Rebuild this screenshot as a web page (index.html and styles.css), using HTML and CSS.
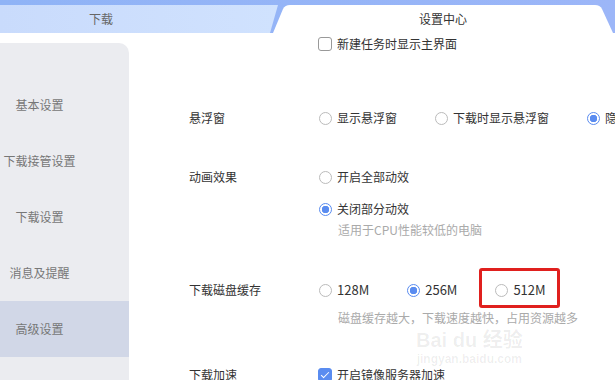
FILE: index.html
```html
<!DOCTYPE HTML>
<html lang="zh-CN">
  <head>
    <meta charset="utf-8">
    <title>设置中心</title>
    <link rel="stylesheet" href="styles.css">
  </head>
  <body>
    <div class="window">
      <div class="tabs">
        <div class="tab">下载</div>
        <div class="tab active">设置中心</div>
      </div> <!-- .tabs -->
      <div class="main">
        <ul class="menu">
          <li>基本设置</li>
          <li>下载接管设置</li>
          <li>下载设置</li>
          <li>消息及提醒</li>
          <li class="current">高级设置</li>
        </ul> <!-- .menu -->
        <div class="content">
          <div class="row first">
            <span class="label"></span>
            <div class="options">
              <label class="opt"><span class="check"></span>新建任务时显示主界面</label>
            </div>
          </div>
          <div class="row float">
            <span class="label">悬浮窗</span>
            <div class="options">
              <label class="opt"><span class="radio"></span>显示悬浮窗</label>
              <label class="opt"><span class="radio"></span>下载时显示悬浮窗</label>
              <label class="opt"><span class="radio on"></span>隐藏悬浮窗</label>
            </div>
          </div>
          <div class="row anim">
            <span class="label">动画效果</span>
            <div class="stack">
              <label class="opt"><span class="radio"></span>开启全部动效</label>
              <label class="opt second"><span class="radio on"></span>关闭部分动效</label>
              <p class="hint">适用于CPU性能较低的电脑</p>
            </div>
          </div>
          <div class="row cache">
            <span class="label">下载磁盘缓存</span>
            <div class="stack">
              <div class="options">
                <label class="opt"><span class="radio"></span>128M</label>
                <label class="opt"><span class="radio on"></span>256M</label>
                <label class="opt marked"><span class="radio"></span>512M</label>
              </div>
              <p class="hint">磁盘缓存越大，下载速度越快，占用资源越多</p>
            </div>
          </div>
          <div class="row speed">
            <span class="label">下载加速</span>
            <div class="options">
              <label class="opt"><span class="check on"></span>开启镜像服务器加速</label>
            </div>
          </div>
          <div class="watermark">
            <span class="wm-logo">Bai du 经验</span>
            <span class="wm-url">jingyan.baidu.com</span>
          </div>
        </div> <!-- .content -->
      </div> <!-- .main -->
    </div> <!-- .window -->
  </body>
</html>
```

FILE: styles.css
```css
* {
  margin: 0;
  padding: 0; }

html, body {
  width: 615px;
  height: 380px;
  overflow: hidden; }

body {
  background: #fff;
  font-family: "Noto Sans CJK SC", "Liberation Sans", sans-serif;
  font-size: 12px;
  line-height: 20px;
  color: #333; }

.tabs {
  display: flex;
  height: 33px;
  padding-top: 5px;
  box-sizing: border-box;
  background: linear-gradient(to right, #8fb3f6, #9cb6f8); }

.tab {
  flex: none;
  width: 278px;
  height: 28px;
  line-height: 28px;
  box-sizing: border-box;
  text-align: center;
  padding-right: 76px;
  color: #666;
  background: linear-gradient(to right, #c9dbfc, #d0e2fe);
  clip-path: polygon(0 0, 278px 0, 270px 28px, 0 28px); }

.tab.active {
  width: 340px;
  margin-left: -5px;
  padding-right: 0;
  color: #333;
  background: #fff;
  clip-path: path('M0 28 L10 4 Q12 0 17 0 L322 0 Q327 0 329 4 L340 28 Z'); }

.main {
  display: flex;
  height: 347px; }

.menu {
  flex: none;
  width: 129px;
  margin-top: 10px;
  padding-top: 34px;
  list-style: none;
  background: #ebecf0;
  border-top-right-radius: 10px; }

.menu li {
  height: 56px;
  line-height: 56px;
  padding-right: 50px;
  text-align: center;
  color: #777; }

.menu li.current {
  background: #d1d7e7; }

.content {
  position: relative;
  flex: 1;
  padding-left: 60px;
  padding-top: 1px; }

.row {
  display: flex; }

.label {
  flex: none;
  width: 130px; }

.options {
  display: flex;
  gap: 38px;
  white-space: nowrap; }

.float { margin-top: 54px; }
.anim { margin-top: 39px; }
.cache { margin-top: 40px; }
.speed { margin-top: 37px; }

.opt {
  display: flex;
  align-items: center;
  gap: 5px;
  white-space: nowrap; }

.cache .opt {
  font-size: 13px; }

.second {
  margin-top: 12px; }

.hint {
  padding-left: 19px;
  margin-top: 1px;
  color: #aaa;
  white-space: nowrap; }

.cache .hint {
  margin-top: 8px; }

.radio {
  flex: none;
  width: 13px;
  height: 13px;
  box-sizing: border-box;
  border: 1px solid #bbb;
  border-radius: 50%;
  background: #fff; }

.radio.on {
  border-color: #5a8cf0;
  background: radial-gradient(circle, #5a8cf0 0 3.5px, #fff 4px); }

.check {
  flex: none;
  width: 14px;
  height: 14px;
  margin-left: -1px;
  box-sizing: border-box;
  border: 1px solid #999;
  border-radius: 3px;
  background: #fff; }

.check.on {
  position: relative;
  border-color: #5a8cf0;
  background: #5a8cf0; }

.check.on:after {
  content: "";
  position: absolute;
  left: 4px;
  top: 1px;
  width: 3px;
  height: 7px;
  border: solid #fff;
  border-width: 0 1.5px 1.5px 0;
  transform: rotate(45deg); }

.marked {
  position: relative; }

.marked:before {
  content: "";
  position: absolute;
  left: -16px;
  top: -12px;
  width: 81px;
  height: 40px;
  box-sizing: border-box;
  border: 3px solid #e0201e;
  border-radius: 3px; }

.watermark {
  position: absolute;
  left: 287px;
  top: 296px;
  display: flex;
  flex-direction: column;
  align-items: center;
  color: rgba(0, 0, 0, 0.07);
  pointer-events: none; }

.wm-logo {
  font-family: "Liberation Sans", "Noto Sans CJK SC", sans-serif;
  font-size: 20px;
  line-height: 23px;
  font-weight: bold; }

.wm-url {
  font-family: "Liberation Sans", sans-serif;
  font-size: 12px;
  line-height: 14px;
  font-weight: bold; }
```
